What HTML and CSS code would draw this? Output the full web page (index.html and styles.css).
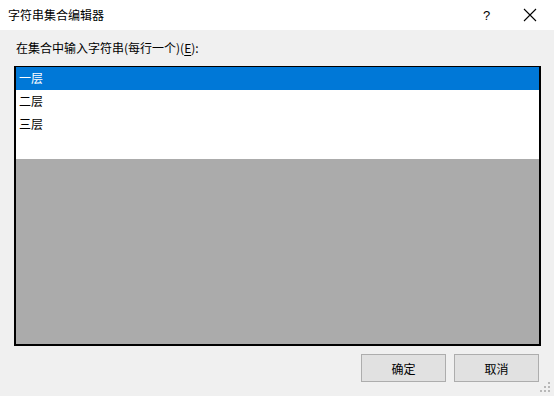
FILE: index.html
```html
<!DOCTYPE html>
<html lang="zh-CN">
<head>
    <meta charset="UTF-8">
    <title>字符串集合编辑器</title>
    <link rel="stylesheet" href="styles.css">
</head>
<body>
    <div class="dialog">
        <header class="titlebar">
            <span class="title">字符串集合编辑器</span>
            <span class="help">?</span>
            <svg class="close" width="14" height="14" viewBox="0 0 14 14">
                <path d="M1 1 L13 13 M13 1 L1 13" stroke="#000" stroke-width="1.1" fill="none"/>
            </svg>
        </header>
        <main class="body">
            <label class="prompt">在集合中输入字符串(每行一个)(<u>E</u>):</label>
            <div class="listbox">
                <div class="lines">
                    <div class="line selected">一层</div>
                    <div class="line">二层</div>
                    <div class="line">三层</div>
                </div>
                <div class="empty"></div>
            </div>
            <div class="buttons">
                <button class="btn">确定</button>
                <button class="btn">取消</button>
            </div>
        </main>
        <svg class="grip" width="12" height="12" viewBox="0 0 12 12">
            <rect x="8" y="0" width="2" height="2" fill="#b8b8b8"/>
            <rect x="4" y="4" width="2" height="2" fill="#b8b8b8"/>
            <rect x="8" y="4" width="2" height="2" fill="#b8b8b8"/>
            <rect x="0" y="8" width="2" height="2" fill="#b8b8b8"/>
            <rect x="4" y="8" width="2" height="2" fill="#b8b8b8"/>
            <rect x="8" y="8" width="2" height="2" fill="#b8b8b8"/>
        </svg>
    </div>
</body>
</html>
```

FILE: styles.css
```css
html {
    font-family: "Noto Sans CJK SC", "Liberation Sans", sans-serif;
    font-size: 12px;
    color: #000;
}
body {
    margin: 0;
    width: 554px;
    height: 396px;
    overflow: hidden;
}
.dialog {
    position: relative;
    display: flex;
    flex-direction: column;
    height: 396px;
    background: #f0f0f0;
}
.titlebar {
    display: flex;
    align-items: center;
    height: 30px;
    background: #fff;
    padding-left: 8px;
}
.title {
    flex: 1;
    line-height: 30px;
}
.help {
    width: 14px;
    font-family: "Liberation Sans", sans-serif;
    font-size: 13px;
    margin-right: 26px;
}
.close {
    margin-right: 17px;
}
.body {
    flex: 1;
    display: flex;
    flex-direction: column;
    padding: 9px 13px 0 14px;
}
.prompt {
    padding-left: 2px;
    line-height: 18px;
    margin-bottom: 9px;
}
.prompt u {
    text-decoration-thickness: 1px;
    text-underline-offset: 2px;
}
.listbox {
    display: flex;
    flex-direction: column;
    height: 277px;
    border: 2px solid #000;
    border-top-width: 1px;
    background: #ababab;
}
.lines {
    height: 92px;
    background: #fff;
}
.line {
    height: 23px;
    line-height: 22px;
    padding-left: 3px;
}
.line.selected {
    background: #0078d7;
    color: #fff;
}
.empty {
    flex: 1;
}
.buttons {
    display: flex;
    justify-content: flex-end;
    gap: 8px;
    margin-top: 8px;
    margin-right: 2px;
}
.btn {
    width: 85px;
    height: 28px;
    background: #e1e1e1;
    border: 1px solid #adadad;
    font: inherit;
    padding: 0;
}
.grip {
    position: absolute;
    right: 2px;
    bottom: 2px;
}
```
